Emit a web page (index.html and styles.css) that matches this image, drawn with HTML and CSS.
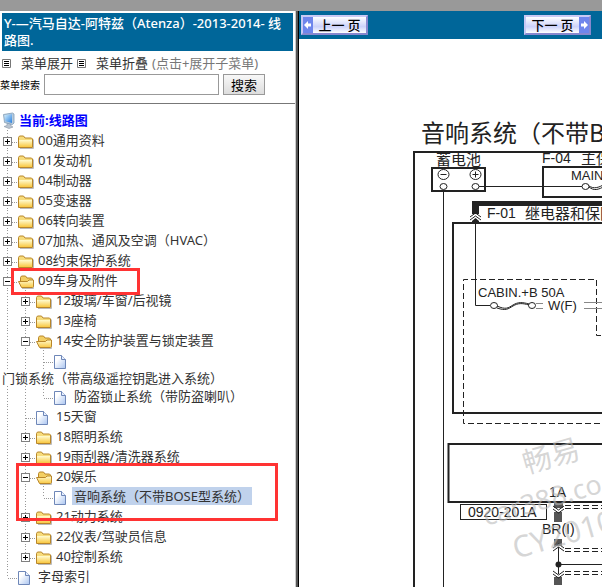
FILE: index.html
```html
<!DOCTYPE html>
<html lang="zh-CN">
<head>
  <meta charset="UTF-8">
  <meta name="viewport" content="width=device-width, initial-scale=1.0">
  <title>汽马自达-阿特兹 线路图</title>
  <link rel="stylesheet" href="styles.css">
</head>
<body>
  <svg class="defs" aria-hidden="true">
    <defs>
      <linearGradient id="gold" x1="0" y1="0" x2="0" y2="1">
        <stop offset="0" stop-color="#fffbd0"/><stop offset="1" stop-color="#f9c842"/>
      </linearGradient>
      <linearGradient id="paper" x1="0" y1="0" x2="1" y2="1">
        <stop offset="0.3" stop-color="#fff"/><stop offset="1" stop-color="#a9c4f0"/>
      </linearGradient>
      <linearGradient id="screen" x1="0" y1="0" x2="1" y2="1">
        <stop offset="0" stop-color="#d5f1ff"/><stop offset="1" stop-color="#2b7fdc"/>
      </linearGradient>
    </defs>
    <symbol id="folder" viewBox="0 0 18 18">
      <path d="M2 15.500h13.500v-9" fill="none" stroke="#bbb"/>
      <path d="M.5 4.500l1-1.500h4l1.500 2h6.500l1 1v8.500h-14z" fill="#f7dc7c" stroke="#b8862b"/>
      <path d="M1 7h13v7h-13z" fill="url(#gold)"/>
    </symbol>
    <symbol id="folder-open" viewBox="0 0 18 18">
      <path d="M4 15.500h11.500v-7" fill="none" stroke="#bbb"/>
      <path d="M2.500 12.500v-8l1-1.500h4l1.500 2h4.500l1 1v7" fill="#f3cf63" stroke="#b8862b"/>
      <path d="M.5 8.500h9l1.500-1.500h4.500v6.500l-1 1h-11z" fill="url(#gold)" stroke="#b8862b"/>
    </symbol>
    <symbol id="page" viewBox="0 0 18 18">
      <path d="M.5 2.500h7l4 4v9h-11z" fill="url(#paper)" stroke="#6e87b8"/>
      <path d="M7.500 2.500v4h4" fill="#e8f0ff" stroke="#6e87b8"/>
    </symbol>
    <symbol id="monitor" viewBox="0 0 18 18">
      <path d="M5 12l4 1v2l2 1-4 1.500-5-2 3-1z" fill="#b9c4d0" stroke="#8996a5" stroke-width=".6"/>
      <path d="M1.500 3.500l9-1.500 1.500 1v9l-1.500 1.500-8-2z" fill="#b8cbdc" stroke="#7f9db9" stroke-width=".8"/>
      <path d="M2.500 4.300l7.500-1.300v9l-6.800-1.700z" fill="url(#screen)"/>
    </symbol>
    <symbol id="list" viewBox="0 0 9 9">
      <path d="M.5.5h8v8h-8z" fill="#fff" stroke="#777"/>
      <path d="M2 2.500h5M2 4.500h5M2 6.500h5" stroke="#000"/>
    </symbol>
  </svg>

  <div class="topbar"></div>
  <div class="frames">
    <nav class="sidebar">
      <h1 class="title">Y-—汽马自达-阿特兹（Atenza）-2013-2014- 线路图.</h1>
      <div class="tools">
        <svg class="list-icon"><use href="#list"/></svg>
        <a href="#open">菜单展开</a>
        <svg class="list-icon"><use href="#list"/></svg>
        <a href="#close">菜单折叠</a>
        <span class="hint">(点击+展开子菜单)</span>
      </div>
      <form class="search">
        <label for="key">菜单搜索</label>
        <input type="text" id="key">
        <button type="button">搜索</button>
      </form>
      <hr>

      <div class="tree">
        <div class="row root"><svg class="icon"><use href="#monitor"/></svg><a href="#root">当前:线路图</a></div>
        <div class="row"><span class="guide branch"><button class="toggle plus" aria-label="展开"></button></span><svg class="icon"><use href="#folder"/></svg><a href="#n00">00通用资料</a></div>
        <div class="row"><span class="guide branch"><button class="toggle plus" aria-label="展开"></button></span><svg class="icon"><use href="#folder"/></svg><a href="#n01">01发动机</a></div>
        <div class="row"><span class="guide branch"><button class="toggle plus" aria-label="展开"></button></span><svg class="icon"><use href="#folder"/></svg><a href="#n04">04制动器</a></div>
        <div class="row"><span class="guide branch"><button class="toggle plus" aria-label="展开"></button></span><svg class="icon"><use href="#folder"/></svg><a href="#n05">05变速器</a></div>
        <div class="row"><span class="guide branch"><button class="toggle plus" aria-label="展开"></button></span><svg class="icon"><use href="#folder"/></svg><a href="#n06">06转向装置</a></div>
        <div class="row"><span class="guide branch"><button class="toggle plus" aria-label="展开"></button></span><svg class="icon"><use href="#folder"/></svg><a href="#n07">07加热、通风及空调（HVAC）</a></div>
        <div class="row"><span class="guide branch"><button class="toggle plus" aria-label="展开"></button></span><svg class="icon"><use href="#folder"/></svg><a href="#n08">08约束保护系统</a></div>
        <div class="row"><span class="guide branch"><button class="toggle" aria-label="折叠"></button></span><svg class="icon"><use href="#folder-open"/></svg><a href="#n09">09车身及附件</a><span class="mark mark-body"></span></div>
        <div class="row"><span class="guide"></span><span class="guide branch"><button class="toggle plus" aria-label="展开"></button></span><svg class="icon"><use href="#folder"/></svg><a href="#n12">12玻璃/车窗/后视镜</a></div>
        <div class="row"><span class="guide"></span><span class="guide branch"><button class="toggle plus" aria-label="展开"></button></span><svg class="icon"><use href="#folder"/></svg><a href="#n13">13座椅</a></div>
        <div class="row"><span class="guide"></span><span class="guide branch"><button class="toggle" aria-label="折叠"></button></span><svg class="icon"><use href="#folder-open"/></svg><a href="#n14">14安全防护装置与锁定装置</a></div>
        <div class="row"><span class="guide"></span><span class="guide"></span><span class="guide branch"></span><svg class="icon"><use href="#page"/></svg></div>
        <div class="wrapped"><a href="#n1401">门锁系统（带高级遥控钥匙进入系统）</a></div>
        <div class="row"><span class="guide"></span><span class="guide"></span><span class="guide branch last"></span><svg class="icon"><use href="#page"/></svg><a href="#n1402">防盗锁止系统（带防盗喇叭）</a></div>
        <div class="row"><span class="guide"></span><span class="guide branch"></span><svg class="icon"><use href="#page"/></svg><a href="#n15">15天窗</a></div>
        <div class="row"><span class="guide"></span><span class="guide branch"><button class="toggle plus" aria-label="展开"></button></span><svg class="icon"><use href="#folder"/></svg><a href="#n18">18照明系统</a></div>
        <div class="row"><span class="guide"></span><span class="guide branch"><button class="toggle plus" aria-label="展开"></button></span><svg class="icon"><use href="#folder"/></svg><a href="#n19">19雨刮器/清洗器系统</a></div>
        <div class="row"><span class="guide"></span><span class="guide branch"><button class="toggle" aria-label="折叠"></button></span><svg class="icon"><use href="#folder-open"/></svg><a href="#n20">20娱乐</a><span class="mark mark-audio"></span></div>
        <div class="row"><span class="guide"></span><span class="guide"></span><span class="guide branch last"></span><svg class="icon"><use href="#page"/></svg><a class="selected" href="#n2001">音响系统（不带BOSE型系统）</a></div>
        <div class="row"><span class="guide"></span><span class="guide branch"><button class="toggle plus" aria-label="展开"></button></span><svg class="icon"><use href="#folder"/></svg><a href="#n21">21动力系统</a></div>
        <div class="row"><span class="guide"></span><span class="guide branch"><button class="toggle plus" aria-label="展开"></button></span><svg class="icon"><use href="#folder"/></svg><a href="#n22">22仪表/驾驶员信息</a></div>
        <div class="row"><span class="guide"></span><span class="guide branch last"><button class="toggle plus" aria-label="展开"></button></span><svg class="icon"><use href="#folder"/></svg><a href="#n40">40控制系统</a></div>
        <div class="row"><span class="guide branch last"></span><svg class="icon"><use href="#page"/></svg><a href="#index">字母索引</a></div>
      </div>
    </nav>

    <div class="divider"></div>

    <main class="viewer">
      <div class="pager">
        <button class="page-btn"><svg class="arrow" viewBox="0 0 10 16"><path d="M1 8l4-4v2.500h3v3h-3v2.500z"/></svg><span>上一 页</span></button>
        <button class="page-btn next"><span>下一 页</span><svg class="arrow" viewBox="0 0 10 16"><path d="M9 8l-4-4v2.500h-3v3h3v2.500z"/></svg></button>
      </div>
      <svg class="diagram" width="400" height="548" viewBox="299 39 400 548">
        <text class="heading" x="421" y="142">音响系统（不带Bo</text>
        <!-- outer frame -->
        <path class="bold" d="M700 152H414V600"/>
        <!-- battery -->
        <text x="436" y="165" class="cjk">蓄电池</text>
        <rect class="bold" x="432" y="168" width="53" height="23"/>
        <g class="thin">
          <ellipse cx="443.500" cy="174.500" rx="5.500" ry="5"/>
          <ellipse cx="475.500" cy="174.500" rx="5.500" ry="5"/>
          <path d="M440.500 174.500h6M472.500 174.500h6M475.500 171.500v6"/>
          <ellipse cx="443.500" cy="186.500" rx="3.500" ry="3"/>
          <ellipse cx="475.500" cy="186.500" rx="3.500" ry="3"/>
          <path d="M479 186.500H582M443.500 190V600"/>
        </g>
        <!-- main fuse -->
        <text x="542" y="163">F-04</text>
        <text x="581" y="164" class="cjk">主保</text>
        <path class="bold" d="M700 167H543V197H700"/>
        <text class="small" x="571" y="180">MAIN</text>
        <g class="thin">
          <ellipse cx="585.500" cy="186.500" rx="3.500" ry="3"/>
          <path d="M589 187c5 4 9 3 16-1M589 186c5 3 9 2 16-2"/>
        </g>
        <!-- relay and fuse block -->
        <path d="M472 201H700V206H479V214H472z" fill="#222"/>
        <path class="thin" d="M470 217l5.500-4 5.500 4M470 220l5.500-4 5.500 4"/>
        <path d="M472 221l3.500-3 3.500 3v2h-7z" fill="#222"/>
        <text x="487" y="218">F-01</text>
        <text x="525" y="219" class="cjk">继电器和保险</text>
        <path class="bold" d="M700 223H453V413H700"/>
        <path class="thin" d="M475.500 223V305.500H490"/>
        <path class="dash" d="M700 335.500H596.500V279.500H463.500V423.500H700"/>
        <text class="small" x="478" y="297">CABIN.+B 50A</text>
        <g class="thin">
          <ellipse cx="494" cy="305.500" rx="3.500" ry="3"/>
          <ellipse cx="532" cy="305.500" rx="3.500" ry="3"/>
          <path d="M497 306c9 4 11 2 16-1s9-3 16-1M497 308c9 3 11 1 16-2s9-3 16-1"/>
        </g>
        <path class="wire" d="M536 303.500h7M536 308.500h7M584 302.500h116M584 308.500h116"/>
        <text class="small" x="548" y="310">W(F)</text>
        <!-- audio unit -->
        <path class="bold" d="M700 444H448.500V502H700"/>
        <text x="549" y="497">1A</text>
        <rect class="thin" x="460.500" y="504.500" width="86" height="15"/>
        <text x="468" y="517">0920-201A</text>
        <path d="M554 503h9v5h-9zM554 512h8v10h-8zM554 539h8v7h-8zM554 577h8v8h-8z" fill="#555"/>
        <g class="thin">
          <path d="M553 506l5.500 4 5.500-4M553 509l5.500 4 5.500-4"/>
          <path d="M553 548l5.500-4 5.500 4M553 551l5.500-4 5.500 4"/>
          <path d="M553 571l5.500 4 5.500-4M553 574l5.500 4 5.500-4"/>
          <path d="M558.500 547V574M558.500 564.500H700"/>
        </g>
        <circle cx="558.500" cy="564.500" r="3" fill="#222"/>
        <text x="542" y="534">BR(I)</text>
        <path class="dash" d="M565 505.500h135M565 508.500h135M565 548.500h135M565 551.500h135M565 571.500h135M565 574.500h135"/>
        <!-- watermark -->
        <g class="watermark">
          <text class="wm-name" transform="translate(526 474) rotate(-16)">畅易</text>
          <text class="wm-site" transform="translate(486 526) rotate(-16)">car388.co</text>
          <text class="wm-code" transform="translate(516 559) rotate(-16)">CY2010</text>
        </g>
      </svg>
    </main>
  </div>
</body>
</html>
```

FILE: styles.css
```css
* { box-sizing: border-box; }
body { margin: 0; height: 100vh; display: flex; flex-direction: column; overflow: hidden; background: #fff; color: #333; font: 13px/20px "Noto Sans", "Noto Sans CJK SC", sans-serif; }
a { color: inherit; text-decoration: none; }
.defs { position: absolute; width: 0; height: 0; }
.topbar { height: 11px; flex: none; background: #999; }
.frames { flex: 1; min-height: 0; display: grid; grid-template-columns: 295px 4px 1fr; }
.divider { background: #555; border-left: 1px solid #ccc; border-right: 1px solid #000; }

/* left menu */
.sidebar { overflow: hidden; white-space: nowrap; }
.title { margin: 2px 2px 3px; padding: 2px; background: #069; color: #fff; font-size: 13px; line-height: 17px; font-weight: 500; white-space: normal; word-break: break-all; }
.tools { display: flex; align-items: center; height: 18px; padding-left: 2px; }
.tools a { margin-left: 10px; margin-right: 4px; }
.list-icon { width: 9px; height: 9px; flex: none; }
.hint { color: #777; }
.search { display: flex; align-items: center; margin: 2px 0 0; height: 21px; }
.search label { width: 44px; font-size: 10px; color: #000; }
.search input { width: 175px; height: 21px; border: 1px solid #999; padding: 0 2px; }
.search button { width: 42px; height: 21px; margin-left: 4px; padding: 0; border: 1px solid #999; background: linear-gradient(#f8f8f8, #ddd); color: #000; font: 13px/18px "Noto Sans CJK SC", sans-serif; }
hr { margin: 8px 0 6px; border: 0; border-top: 1px solid #777; }

.row { position: relative; display: flex; height: 20px; }
.row a { margin-left: 2px; }
.row.root { padding-left: 2px; color: #00f; font-weight: bold; }
.root a { margin-left: -1px; }
.icon { width: 18px; height: 18px; margin-top: 3px; flex: none; }
.root .icon { margin-top: 1px; }
.guide { width: 18px; height: 20px; flex: none; background: repeating-linear-gradient(#999 0 1px, #fff 1px 3px) 7px 0 / 1px 100% no-repeat; }
.branch { padding: 7px 0 0 3px; background: repeating-linear-gradient(#999 0 1px, #fff 1px 3px) 7px 0 / 1px 100% no-repeat, repeating-linear-gradient(90deg, #999 0 1px, #fff 1px 2px) 8px 12px / 10px 1px no-repeat; }
.branch.last { background-size: 1px 12px, 10px 1px; }
.toggle { display: block; width: 9px; height: 9px; padding: 0; border: 1px solid #808080; border-radius: 0; background: linear-gradient(#000, #000) 1px 3px / 5px 1px no-repeat #fff; }
.toggle.plus { background: linear-gradient(#000, #000) 1px 3px / 5px 1px no-repeat, linear-gradient(#000, #000) 3px 1px / 1px 5px no-repeat #fff; }
.wrapped { height: 16px; line-height: 16px; padding-left: 2px; }
.row .selected { height: 18px; line-height: 18px; margin-top: 1px; margin-left: 0; padding: 0 2px; background: #c0d2ec; }
.mark { position: absolute; z-index: 1; border: 3px solid #f33; pointer-events: none; }
.mark-body { left: 11px; top: -2px; width: 129px; height: 27px; }
.mark-audio { left: 16px; top: -3px; width: 262px; height: 58px; }

/* drawing pane */
.viewer { overflow: hidden; min-width: 0; }
.pager { display: flex; justify-content: space-between; align-items: center; height: 28px; padding: 0 11px 0 2px; background: #069; }
.page-btn { display: flex; align-items: center; width: 67px; height: 20px; padding: 0; border: 2px solid; border-color: #c9c9f4 #8888cf #8888cf #c9c9f4; background: linear-gradient(#fff, #ccd2fa 60%, #fff); color: #000; font: 500 13px/16px "Noto Sans CJK SC", sans-serif; }
.page-btn span { flex: 1; text-align: center; }
.arrow { width: 10px; height: 16px; background: #6f86ec; fill: #fff; }

.diagram { display: block; font-family: "Liberation Sans", "Noto Sans CJK SC", sans-serif; font-size: 14px; fill: #222; }
.diagram .cjk { font-size: 15px; }
.diagram .small { font-size: 13px; }
.diagram .heading { font-size: 24px; font-family: "Noto Sans CJK SC", sans-serif; }
.bold { fill: none; stroke: #222; stroke-width: 2; }
.thin { fill: none; stroke: #222; stroke-width: 1; }
.wire { stroke: #888; }
.dash { fill: none; stroke: #222; stroke-dasharray: 6 3; }
.watermark { fill: #bbb; fill-opacity: .6; font-family: "Noto Sans", "Noto Sans CJK SC", sans-serif; }
.wm-name { font-size: 29px; }
.wm-site { font-size: 27px; }
.wm-code { font-size: 30px; }
```
